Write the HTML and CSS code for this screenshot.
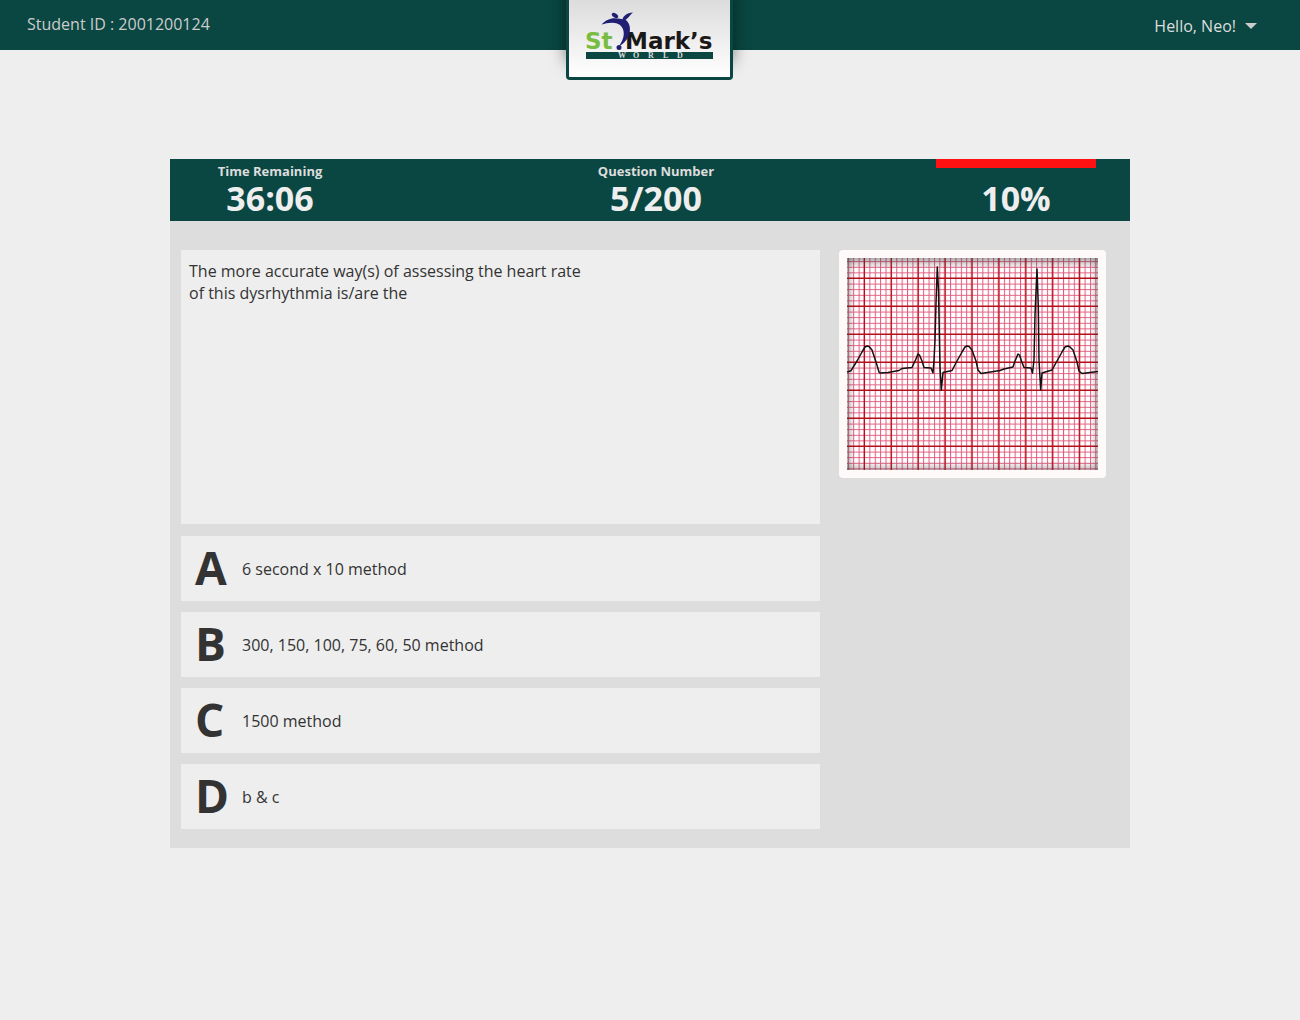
FILE: index.html
```html
<!DOCTYPE html>
<html lang="en">
<head>
<meta charset="utf-8">
<meta name="viewport" content="width=device-width, initial-scale=1">
<title>St. Mark's World - Exam</title>
<link rel="stylesheet" href="styles.css">
</head>
<body>
<header class="topbar">
  <p class="student">Student ID : 2001200124</p>
  <a class="brand" href="#" aria-label="St. Mark's World">
    <svg class="logo" viewBox="0 0 128 50" width="128" height="50">
      <text class="logo-name logo-green" x="-1" y="39">St</text>
      <text class="logo-name" x="39" y="39">Mark’s</text>
      <g class="logo-figure">
        <path d="M15.5 14.6C19 10.500 24 8.200 29 8.300C33 8.400 35.500 9.200 36.500 9.200C37 6.500 40.500 2.800 47 2.500C44.500 4 43 8 39.500 9.800C43 12.500 44.500 16.500 43.800 21.500C43 27.500 39 33 33 36.200C36.500 31 38.500 26 37.500 21C36.500 15.500 32 12.800 26.500 12.700C22 12.600 19 13.600 15.500 14.600Z"/>
        <ellipse cx="29" cy="5.500" rx="3.600" ry="2" transform="rotate(35 29 5.500)"/>
        <circle cx="33" cy="37.500" r="2.500"/>
      </g>
      <rect class="logo-band" x="0" y="42" width="127" height="7"/>
      <text class="logo-world" x="32 47 62 77 91" y="48">WORLD</text>
    </svg>
  </a>
  <button class="user" type="button">Hello, Neo!
    <svg class="caret" viewBox="0 0 12 6" width="12" height="6" aria-hidden="true"><path d="M0 0H12L6 6Z"/></svg>
  </button>
</header>

<main class="exam">
  <section class="stats">
    <div class="stat">
      <h2 class="stat-label">Time Remaining</h2>
      <p class="stat-value">36:06</p>
    </div>
    <div class="stat stat-middle">
      <h2 class="stat-label">Question Number</h2>
      <p class="stat-value">5/200</p>
    </div>
    <div class="stat stat-progress">
      <p class="stat-value">10%</p>
    </div>
  </section>

  <div class="content">
    <section class="quiz">
      <div class="question">
        <p class="question-text">The more accurate way(s) of assessing the heart rate of this dysrhythmia is/are the</p>
      </div>
      <div class="answers">
        <button class="answer" type="button"><span class="letter">A</span><span>6 second x 10 method</span></button>
        <button class="answer" type="button"><span class="letter">B</span><span>300, 150, 100, 75, 60, 50 method</span></button>
        <button class="answer" type="button"><span class="letter">C</span><span>1500 method</span></button>
        <button class="answer" type="button"><span class="letter">D</span><span>b &amp; c</span></button>
      </div>
    </section>

    <figure class="figure">
      <svg class="ecg" viewBox="0 0 251 212" role="img" aria-label="ECG strip">
        <defs>
          <pattern id="minor" x="17" y="20" width="5.380" height="5.600" patternUnits="userSpaceOnUse">
            <path d="M0 .5H5.380M.5 0V5.600" stroke="#d9305c" stroke-width="1" opacity=".8"/>
          </pattern>
          <pattern id="major" x="16" y="19" width="26.900" height="28" patternUnits="userSpaceOnUse">
            <path d="M0 1.300H26.900M1.300 0V28" stroke="#b80f1c" stroke-width="1.400"/>
          </pattern>
          <linearGradient id="edge-y" x2="0" y2="1">
            <stop offset="0" stop-color="#333" stop-opacity=".4"/>
            <stop offset=".05" stop-color="#333" stop-opacity="0"/>
            <stop offset=".96" stop-color="#333" stop-opacity="0"/>
            <stop offset="1" stop-color="#333" stop-opacity=".3"/>
          </linearGradient>
          <linearGradient id="edge-x">
            <stop offset="0" stop-color="#333" stop-opacity=".35"/>
            <stop offset=".03" stop-color="#333" stop-opacity="0"/>
            <stop offset=".97" stop-color="#333" stop-opacity="0"/>
            <stop offset="1" stop-color="#333" stop-opacity=".3"/>
          </linearGradient>
        </defs>
        <rect width="251" height="212" fill="#fff"/>
        <rect width="251" height="212" fill="url(#minor)"/>
        <rect width="251" height="212" fill="url(#major)"/>
        <rect width="251" height="212" fill="url(#edge-y)"/>
        <rect width="251" height="212" fill="url(#edge-x)"/>
        <path class="trace" d="M0 114L4 112.700L10 103L15 94L18 89L20 88L22 88.500L25 92L29 104L32 114L33 115L41 114.500L52 112.500L55 110.500L65 109.500L68.500 102L71 96L72.500 97L75 103L77 109.500L84 110L86 115L87 102L88 82L89 45L90.300 9L91.500 32L93 109L94.300 132L96 114.500L105 112.500L110 103L115 94L118 89L120 88L122 88.500L125 92L129 103L131 112L134 115.500L153 112.500L157 111L166 109L168 103L171 96L172.500 97L174.500 103L177 109.500L184 110L185.500 115L187 102L188 57L190 11L191.300 48L192 102L193.700 132L195 115L205 112L210 103L215 94L218 89L221 88L223 89L226 92L230 104L232 113L235 115.500L251 113.500"/>
      </svg>
    </figure>
  </div>
</main>
</body>
</html>
```
FILE: styles.css
```css
* { box-sizing: border-box; }

body {
  margin: 0;
  background: #eee;
  color: #333;
  font: 16px/22px "Open Sans", "Noto Sans", sans-serif;
}

h2, p, figure { margin: 0; }

button {
  border: 0;
  font: inherit;
  color: inherit;
  cursor: pointer;
}

.topbar {
  display: grid;
  grid-template-columns: 1fr auto 1fr;
  align-items: start;
  height: 50px;
  padding: 0 43px 0 27px;
  background: #0a4742;
  color: #ccc;
}

.student { padding-top: 13px; }

.brand {
  position: absolute;
  left: 50%;
  top: 0;
  width: 167px;
  height: 80px;
  margin-left: -84px;
  padding: 10px 0 0 17px;
  border: 3px solid #0a4742;
  border-top: 0;
  border-radius: 0 0 4px 4px;
  background: linear-gradient(#dcdcdc, #fff);
  box-shadow: 0 -18px 16px rgba(0, 0, 0, .5);
}

.logo { display: block; overflow: visible; }
.logo-name { font: bold 23px "DejaVu Sans", sans-serif; fill: #1b1918; }
.logo-green { fill: #78bd42; }
.logo-figure { fill: #211f74; }
.logo-band { fill: #0a4742; }
.logo-world { font: bold 8px "Liberation Serif", serif; fill: #ddd; }

.user {
  grid-column: 3;
  justify-self: end;
  display: flex;
  align-items: center;
  gap: 9px;
  padding: 15px 0 0;
  background: none;
  color: #ddd;
}

.caret { fill: #ccc; }

.exam {
  max-width: 960px;
  margin: 109px auto 0;
  background: #ddd;
}

.stats {
  display: grid;
  grid-template-columns: 200px 1fr 160px;
  height: 62px;
  padding-right: 34px;
  background: #0a4742;
  text-align: center;
}

.stat {
  display: flex;
  flex-direction: column;
  justify-content: end;
  padding-bottom: 5px;
}

.stat-middle { padding-left: 6px; }
.stat-progress { border-top: 9px solid #f11; }

.stat-label {
  color: #ddd;
  font-size: 13px;
  line-height: 18px;
}

.stat-value {
  color: #eee;
  font-size: 34px;
  font-weight: bold;
  line-height: 36px;
}

.content {
  display: grid;
  grid-template-columns: minmax(0, 639px) minmax(0, 267px);
  align-items: start;
  gap: 19px;
  padding: 29px 11px 19px;
}

.question {
  min-height: 274px;
  margin-bottom: 12px;
  padding: 10px 8px;
  background: #eee;
}

.question-text { max-width: 410px; }

.answers {
  display: grid;
  gap: 11px;
}

.answer {
  display: flex;
  align-items: center;
  height: 65px;
  padding: 0 14px;
  background: #eee;
  text-align: left;
}

.letter {
  width: 47px;
  padding-bottom: 4px;
  font-size: 46px;
  font-weight: bold;
}

.figure {
  padding: 8px;
  border-radius: 4px;
  background: #fffafa;
}

.ecg { display: block; width: 100%; }

.trace {
  fill: none;
  stroke: #111;
  stroke-width: 1.500px;
  stroke-linejoin: round;
}
```
